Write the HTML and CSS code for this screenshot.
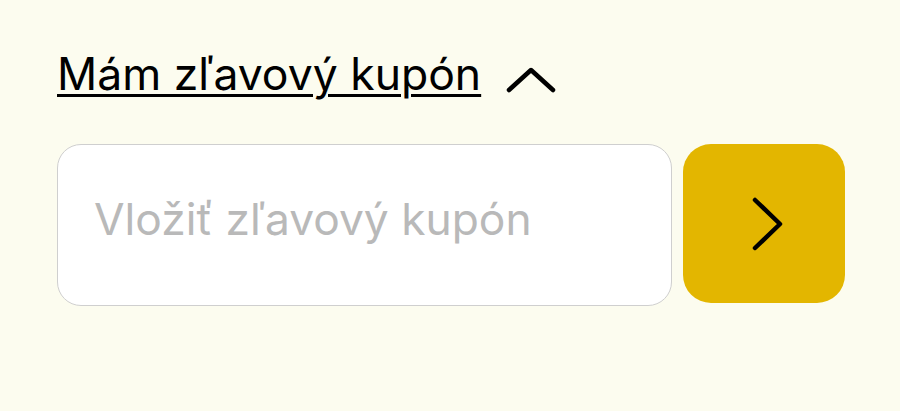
FILE: index.html
```html
<!DOCTYPE html>
<html lang="sk">
<head>
    <meta charset="UTF-8">
    <meta name="viewport" content="width=device-width, initial-scale=1.0">
    <title>Zľavový kupón</title>
    <link rel="stylesheet" href="styles.css">
</head>
<body>
    <div class="coupon">
        <button class="coupon-toggle" type="button">
            <span class="coupon-toggle-text">Mám zľavový kupón</span>
            <svg class="coupon-toggle-icon" width="50" height="26" viewBox="0 0 50 26">
                <path d="M3 23 L25 3 L47 23" fill="none" stroke="#000" stroke-width="4.5" stroke-linecap="round" stroke-linejoin="round"/>
            </svg>
        </button>
        <form class="coupon-form" onsubmit="return false">
            <input class="coupon-input" type="text" placeholder="Vložiť zľavový kupón">
            <button class="coupon-submit" type="submit">
                <svg width="32" height="54" viewBox="0 0 32 54">
                    <path d="M3 3 L28 27 L3 51" fill="none" stroke="#000" stroke-width="4.5" stroke-linecap="round" stroke-linejoin="round"/>
                </svg>
            </button>
        </form>
    </div>
</body>
</html>
```

FILE: styles.css
```css
body {
    margin: 0;
    background-color: #fcfcef;
    font-family: Inter, "Noto Sans", sans-serif;
}

.coupon {
    padding: 42px 55px 0 57px;
}

.coupon-toggle {
    display: flex;
    align-items: center;
    gap: 25px;
    padding: 0;
    border: none;
    background: none;
    font-family: inherit;
    color: #000;
    cursor: pointer;
}

.coupon-toggle-text {
    font-size: 44.5px;
    line-height: 64px;
    text-decoration: underline;
    text-decoration-thickness: 3px;
    text-underline-offset: 4px;
}

.coupon-toggle-icon {
    margin-top: 12px;
}

.coupon-form {
    display: flex;
    gap: 11px;
    margin-top: 38px;
}

.coupon-input {
    width: 615px;
    height: 162px;
    box-sizing: border-box;
    padding: 0 36px 12px;
    border: 1.5px solid #cfcfcf;
    border-radius: 24px;
    background-color: #fff;
    font-family: inherit;
    font-size: 44.3px;
    outline: none;
}

.coupon-input::placeholder {
    color: #b9b9b9;
}

.coupon-submit {
    display: flex;
    align-items: center;
    justify-content: center;
    width: 162px;
    height: 159px;
    padding: 0 0 0 7px;
    border: none;
    border-radius: 28px;
    background-color: #e3b600;
    cursor: pointer;
}
```
